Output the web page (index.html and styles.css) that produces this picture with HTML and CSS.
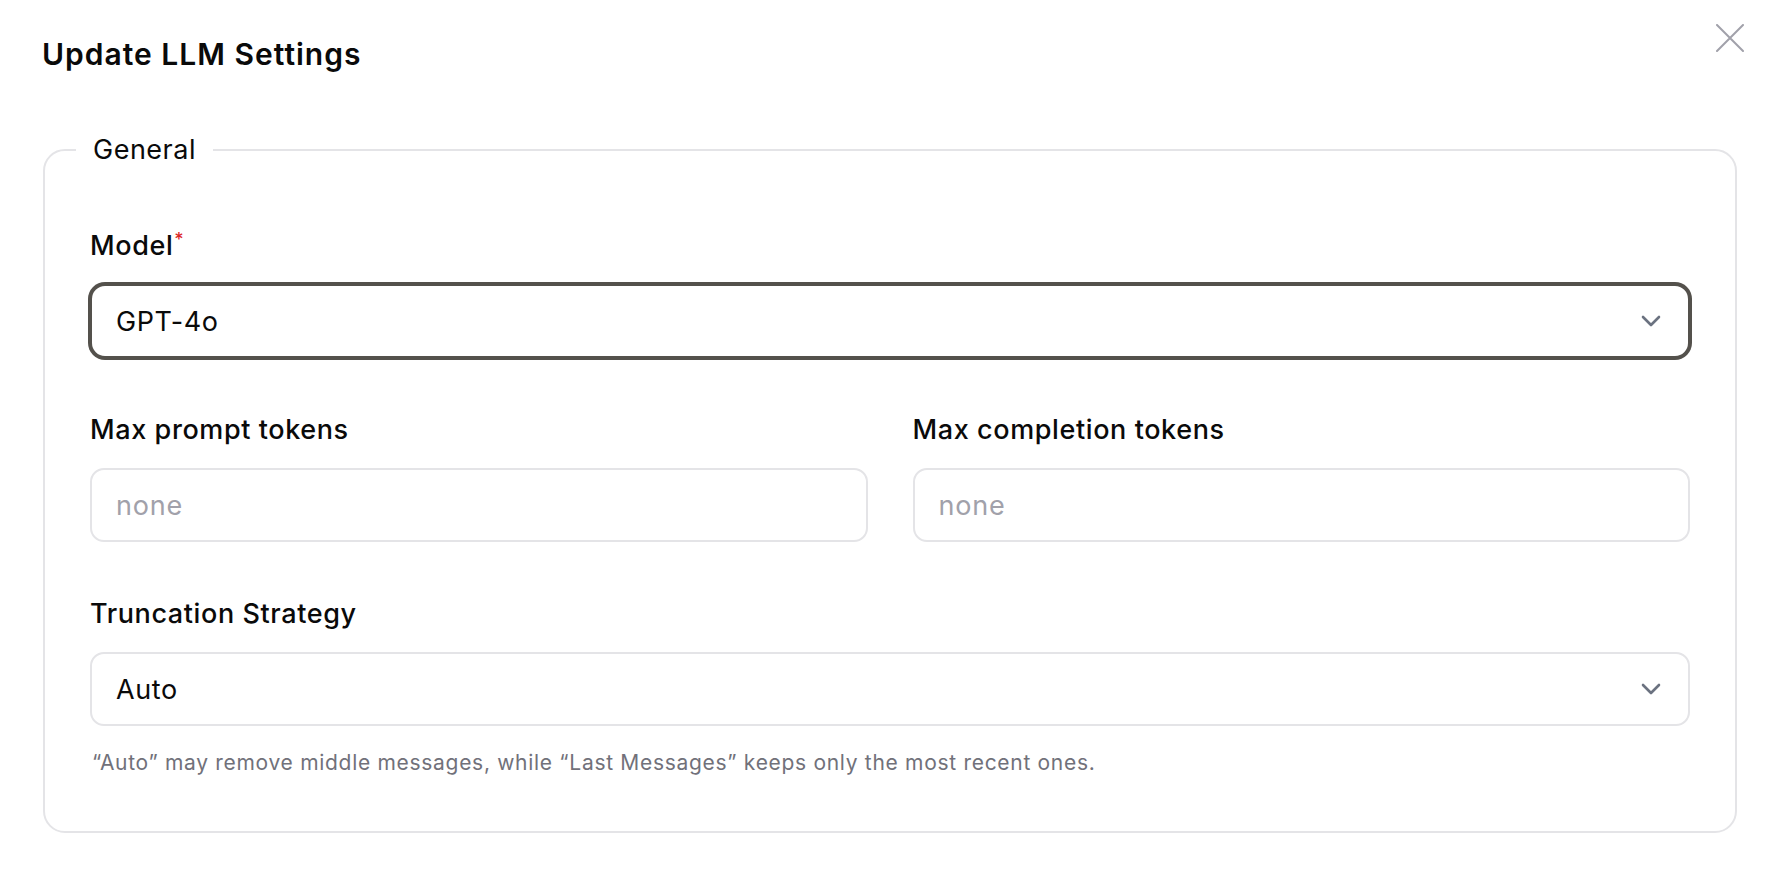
FILE: index.html
```html
<!DOCTYPE html>
<html lang="en">
<head>
<meta charset="utf-8">
<title>Update LLM Settings</title>
<link rel="stylesheet" href="styles.css">
</head>
<body>
<div class="dialog">
  <h1 class="title">Update LLM Settings</h1>
  <button class="close" type="button" aria-label="Close">
    <svg width="28" height="28" viewBox="0 0 28 28" fill="none" stroke="#a1a1aa" stroke-width="2" stroke-linecap="round"><path d="M1 1L27 27M27 1L1 27"/></svg>
  </button>
  <fieldset class="group">
    <legend class="legend">General</legend>
    <div class="group-body">
      <div class="field">
        <label class="label">Model<span class="req">*</span></label>
        <div class="select focused">
          <span class="value">GPT-4o</span>
          <svg class="chev" width="20" height="12" viewBox="0 0 20 12" fill="none" stroke="#6b7280" stroke-width="2.6" stroke-linecap="round" stroke-linejoin="round"><path d="M2 2L10 10L18 2"/></svg>
        </div>
      </div>
      <div class="row">
        <div class="field">
          <label class="label">Max prompt tokens</label>
          <div class="input"><span class="placeholder">none</span></div>
        </div>
        <div class="field">
          <label class="label">Max completion tokens</label>
          <div class="input"><span class="placeholder">none</span></div>
        </div>
      </div>
      <div class="field">
        <label class="label">Truncation Strategy</label>
        <div class="select">
          <span class="value">Auto</span>
          <svg class="chev" width="20" height="12" viewBox="0 0 20 12" fill="none" stroke="#6b7280" stroke-width="2.6" stroke-linecap="round" stroke-linejoin="round"><path d="M2 2L10 10L18 2"/></svg>
        </div>
        <p class="help">“Auto” may remove middle messages, while “Last Messages” keeps only the most recent ones.</p>
      </div>
    </div>
  </fieldset>
</div>
</body>
</html>
```

FILE: styles.css
```css
* { box-sizing: border-box; }
html, body {
  margin: 0;
  padding: 0;
  background: #ffffff;
}
body {
  font-family: Inter, "Noto Sans", "Liberation Sans", sans-serif;
  color: #0a0a0a;
}
.dialog {
  position: relative;
  width: 1772px;
  height: 870px;
  padding: 34px 35px 0 43px;
}
.title {
  margin: 0 0 58px -1px;
  font-size: 30px;
  line-height: 40px;
  font-weight: 600;
  letter-spacing: 1px;
  color: #0a0a0a;
}
.close {
  position: absolute;
  top: 24px;
  right: 28px;
  width: 28px;
  height: 28px;
  padding: 0;
  border: 0;
  background: transparent;
  display: flex;
}
.group {
  margin: 0;
  padding: 0;
  border: 2px solid #e4e4e7;
  border-radius: 22px;
  min-width: 0;
}
.legend {
  margin-left: 31px;
  padding: 0 17px;
  font-size: 27px;
  line-height: 36px;
  font-weight: 400;
  letter-spacing: 0.5px;
}
.group-body {
  display: flex;
  flex-direction: column;
  gap: 54px;
  padding: 60px 45px 53px 45px;
}
.field {
  display: flex;
  flex-direction: column;
  gap: 20px;
  min-width: 0;
}
.label {
  font-size: 27px;
  line-height: 36px;
  font-weight: 500;
  letter-spacing: 0.6px;
  color: #0a0a0a;
}
.req {
  color: #dc2626;
  font-size: 18px;
  vertical-align: top;
  position: relative;
  top: -6px;
  margin-left: 1px;
}
.row {
  display: grid;
  grid-template-columns: 1fr 1fr;
  column-gap: 45px;
}
.select, .input {
  height: 74px;
  border: 2px solid #e4e4e7;
  border-radius: 14px;
  display: flex;
  align-items: center;
  padding: 0 27px 0 24px;
  font-size: 27px;
  letter-spacing: 0.6px;
  background: #fff;
}
.select {
  justify-content: space-between;
}
.select.focused {
  border-color: #54514c;
  box-shadow: 0 0 0 2px #54514c;
  border-radius: 15px;
}
.value {
  color: #0a0a0a;
}
.placeholder {
  color: #a1a1aa;
  letter-spacing: 0.8px;
}
.chev {
  flex: none;
}
.help {
  margin: 2px 0 0 2px;
  font-size: 21px;
  line-height: 30px;
  letter-spacing: 0.7px;
  color: #71717a;
}
```
